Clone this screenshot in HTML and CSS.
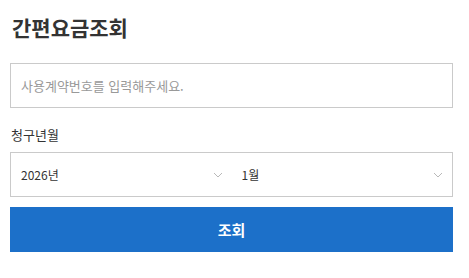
FILE: index.html
```html
<!DOCTYPE html>
<html lang="ko">
<head>
    <meta charset="UTF-8">
    <meta name="viewport" content="width=device-width, initial-scale=1.0">
    <title>간편요금조회</title>
    <link rel="stylesheet" href="styles.css">
</head>
<body>
    <div class="container">
        <h1 class="page-title">간편요금조회</h1>

        <form id="billForm">
            <input type="text" class="text-input" id="contractNo" placeholder="사용계약번호를 입력해주세요.">

            <label class="field-label" for="year">청구년월</label>
            <div class="select-box">
                <div class="select-wrap">
                    <select id="year" class="select">
                        <option>2026년</option>
                        <option>2025년</option>
                        <option>2024년</option>
                    </select>
                    <svg class="chevron" width="10" height="6" viewBox="0 0 10 6"><path d="M1 1l4 4 4-4" fill="none" stroke="#b9b9b9" stroke-width="1"/></svg>
                </div>
                <div class="select-wrap">
                    <select id="month" class="select">
                        <option>1월</option>
                        <option>2월</option>
                        <option>3월</option>
                    </select>
                    <svg class="chevron" width="10" height="6" viewBox="0 0 10 6"><path d="M1 1l4 4 4-4" fill="none" stroke="#b9b9b9" stroke-width="1"/></svg>
                </div>
            </div>

            <button type="submit" class="submit-btn">조회</button>
        </form>
    </div>
</body>
</html>
```

FILE: styles.css
```css
body {
    font-family: 'Noto Sans CJK KR', 'Noto Sans', sans-serif;
    background-color: #fff;
    color: #333;
    margin: 0;
    padding: 0;
}

.container {
    width: 443px;
    padding: 12px 0 0 10px;
}

.page-title {
    font-size: 21px;
    line-height: 30px;
    font-weight: bold;
    color: #333;
    margin: 0 0 21px 2px;
}

.text-input {
    display: block;
    width: 100%;
    height: 45px;
    box-sizing: border-box;
    border: 1px solid #cacaca;
    padding: 0 10px;
    font-family: inherit;
    font-size: 13px;
    color: #333;
    outline: none;
}

.text-input::placeholder {
    color: #999;
}

.field-label {
    display: block;
    font-size: 13px;
    line-height: 20px;
    margin: 17px 0 7px 1px;
    color: #333;
}

.select-box {
    display: flex;
    height: 45px;
    box-sizing: border-box;
    border: 1px solid #cacaca;
}

.select-wrap {
    position: relative;
    flex: 1;
}

.select {
    appearance: none;
    -webkit-appearance: none;
    width: 100%;
    height: 100%;
    border: none;
    background: transparent;
    padding: 0 10px;
    font-family: inherit;
    font-size: 12px;
    color: #333;
    outline: none;
}

.chevron {
    position: absolute;
    right: 9px;
    top: 19px;
    pointer-events: none;
}

.submit-btn {
    display: block;
    width: 100%;
    height: 45px;
    margin-top: 10px;
    border: none;
    background-color: #1c70c9;
    color: #fff;
    font-family: inherit;
    font-size: 15px;
    font-weight: bold;
    cursor: pointer;
}
```
